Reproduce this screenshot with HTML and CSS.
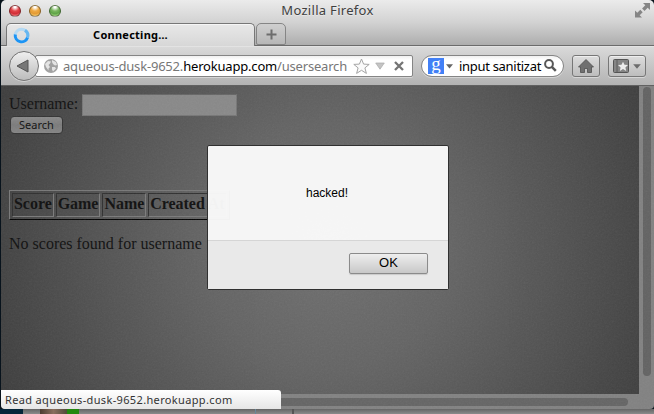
FILE: index.html
```html
<!DOCTYPE html>
<html lang="en">
<head>
<meta charset="utf-8">
<title>Mozilla Firefox</title>
<link rel="stylesheet" href="styles.css">
</head>
<body>
<div class="window">
  <header class="chrome-top">
    <div class="titlebar">
      <div class="lights"><i class="light red"></i><i class="light amber"></i><i class="light green"></i></div>
      <span class="window-title">Mozilla Firefox</span>
      <svg class="expand" width="15" height="15" viewBox="0 0 15 15" fill="#858585"><path d="M8 0h7v7l-2.300-2.300-3.200 3.200-2.400-2.400 3.200-3.200zM0 7.500l2.300 2.300 3-3 2.400 2.400-3 3L7 14.500H0z"/></svg>
    </div>
    <div class="tabs">
      <div class="tab">
        <svg class="spinner" width="17" height="17" viewBox="0 0 17 17" fill="none" stroke-width="3"><circle cx="8.500" cy="8.500" r="6.300" stroke="#b5d9f2"/><path d="M2.300 7.500A6.300 6.300 0 0 0 14.500 10.500" stroke="#1c94f4"/><path d="M14.500 10.500A6.300 6.300 0 0 0 12 3.300" stroke="#67b7f0"/></svg>
        <span class="tab-label">Connecting…</span>
      </div>
      <div class="new-tab"><svg width="11" height="11" viewBox="0 0 11 11"><path d="M5.500 0.500v10M0.500 5.500h10" stroke="#6d6d6d" stroke-width="2"/></svg></div>
    </div>
  </header>
  <nav class="toolbar">
    <div class="back"><svg width="14" height="14" viewBox="0 0 14 14"><path d="M1 7L12 1v12z" fill="#777" stroke="#555"/></svg></div>
    <div class="url">
      <svg class="globe" width="14" height="14" viewBox="0 0 14 14"><circle cx="7" cy="7" r="7" fill="#a2a2a2"/><path d="M1 5l3-3 3 .5-1 2L4.500 6 6 8l-1.500 1.500v2L2 8zM8 1l4 2 1 3-2 .5L9 5 8 3zM8 8l3 0 1 1.500-3 3-1-2z" fill="#e4e4e4"/></svg>
      <span class="address">aqueous-dusk-9652.<b>herokuapp.com</b>/usersearch</span>
      <svg class="star" width="17" height="17" viewBox="0 0 17 17"><path d="M8.500 1l2.100 5.100 5.600.3-4.300 3.500 1.500 5.500-4.900-3.100-4.900 3.100 1.500-5.500L.8 6.400l5.600-.3z" fill="#fafafa" stroke="#a5a5a5"/></svg>
      <svg class="drop" width="10" height="8" viewBox="0 0 10 8"><path d="M.7 1h8.600L5 7.200z" fill="#c4c4c4" stroke="#aaa" stroke-width=".7"/></svg>
      <svg class="stop" width="10" height="10" viewBox="0 0 10 10"><path d="M1 1l8 8M9 1L1 9" stroke="#747474" stroke-width="2.300"/></svg>
    </div>
    <div class="search">
      <span class="engine">g</span>
      <svg class="engine-drop" width="7" height="5" viewBox="0 0 7 5"><path d="M0 .3h7L3.500 4.500z" fill="#666"/></svg>
      <span class="query">input sanitizat</span>
      <svg class="lens" width="13" height="13" viewBox="0 0 13 13" fill="none" stroke="#585858"><circle cx="5" cy="5" r="3.900" stroke-width="2"/><path d="M7.800 7.800l4 4" stroke-width="2.500"/></svg>
    </div>
    <div class="tool home"><svg width="16" height="14" viewBox="0 0 16 14"><path d="M8 .5L15.500 8h-2v5.500h-4v-4h-3v4h-4V8h-2z" fill="#707070" stroke="#4f4f4f" stroke-width=".8"/></svg></div>
    <div class="tool marks"><svg width="17" height="15" viewBox="0 0 17 15"><rect x=".5" y=".5" width="15" height="13" rx="1" fill="#858585" stroke="#555"/><path d="M4 1v12" stroke="#5c5c5c"/><path d="M10 2.800l1.500 3 3.500.3-2.600 2.300.8 3.600-3.200-1.900L6.800 12l.8-3.600L5 6.100l3.500-.3z" fill="#eee"/></svg><svg width="8" height="5" viewBox="0 0 8 5"><path d="M.2.300h7.600L4 4.800z" fill="#6c6c6c"/></svg></div>
  </nav>
  <main class="viewport">
    <div class="page">
      <form class="form">
        <div class="field"><label>Username:</label><span class="input"></span></div>
        <span class="submit">Search</span>
      </form>
      <table class="scores" border="1"><tr><th>Score</th><th>Game</th><th>Name</th><th>Created At</th></tr></table>
      <p class="empty">No scores found for username</p>
    </div>
    <div class="vbar"><i></i></div>
    <div class="hbar"><i></i></div>
    <div class="corner"></div>
    <svg class="grain" width="653" height="324"><filter id="noise"><feTurbulence type="fractalNoise" baseFrequency=".6" numOctaves="2"/><feColorMatrix type="saturate" values="0"/></filter><rect width="653" height="324" filter="url(#noise)"/></svg>
    <section class="dialog">
      <div class="message">hacked!</div>
      <div class="actions"><span class="ok">OK</span></div>
    </section>
    <div class="status">Read aqueous-dusk-9652.herokuapp.com</div>
  </main>
</div>
<div class="behind"><i class="navy"></i><i class="gap"></i><i class="photo"></i><i class="leaf"></i><i class="pane"></i><i class="divider"></i></div>
</body>
</html>
```

FILE: styles.css
```css
* { box-sizing: border-box; }
body {
  margin: 0;
  width: 654px;
  height: 414px;
  overflow: hidden;
  background: #08131c;
  font-family: "Noto Sans", "Open Sans", sans-serif;
}
svg { display: block; flex: none; }
.window {
  width: 653px;
  height: 409px;
  margin-left: 1px;
  overflow: hidden;
  border-radius: 5px 5px 4px 4px;
}
.chrome-top {
  height: 46px;
  background: linear-gradient(#ebebeb, #d2d2d2 50%, #adadad);
  border-bottom: 1px solid #6b6b6b;
}
.titlebar {
  display: flex;
  align-items: center;
  height: 23px;
  padding: 0 3px 2px 8px;
}
.lights { display: flex; gap: 8px; width: 76px; }
.light { width: 12px; height: 12px; border-radius: 50%; border: 1px solid #0006; }
.red { background: radial-gradient(circle at 50% 10%, #fff 8%, #e3474b 40%, #d22d36 65%, #ffa5a5); }
.amber { background: radial-gradient(circle at 50% 10%, #fff 8%, #eeaa45 40%, #e39b35 65%, #ffe795); }
.green { background: radial-gradient(circle at 50% 10%, #fff 8%, #7bb760 40%, #5fa448 65%, #c7f3a0); }
.window-title {
  flex: 1;
  text-align: center;
  font-size: 13px;
  line-height: 20px;
  letter-spacing: .3px;
  color: #404040;
  padding: 0 19px 2px 0;
  text-shadow: 0 1px #fff6;
}
.expand { margin-right: 1px; margin-left: 46px; }
.tabs { display: flex; height: 23px; padding-left: 5px; gap: 1px; }
.tab {
  display: flex;
  align-items: center;
  width: 249px;
  height: 23px;
  padding-left: 6px;
  background: linear-gradient(#e8e8e8, #d7d7d7);
  border: 1px solid #777;
  border-bottom: 0;
  border-radius: 5px 5px 0 0;
  box-shadow: inset 0 1px #f6f6f6;
}
.tab-label {
  width: 191px;
  text-align: center;
  font-size: 11px;
  font-weight: 700;
  line-height: 20px;
  letter-spacing: .25px;
  margin-left: 5px;
}
.new-tab {
  display: flex;
  align-items: center;
  justify-content: center;
  width: 30px;
  height: 22px;
  border: 1px solid #858585;
  border-radius: 5px 5px 2px 2px;
  background: linear-gradient(#cfcfcf, #b7b7b7);
}
.toolbar {
  display: flex;
  align-items: center;
  height: 40px;
  padding-left: 8px;
  background: linear-gradient(#d9d9d9, #b3b3b3);
  border-top: 1px solid #e3e3e3;
  border-bottom: 1px solid #616161;
}
.back {
  position: relative;
  z-index: 1;
  display: flex;
  align-items: center;
  justify-content: center;
  width: 30px;
  height: 30px;
  padding-right: 3px;
  border: 1px solid #747474;
  border-radius: 50%;
  background: linear-gradient(#efefef, #bcbcbc);
  box-shadow: 0 1px #fff6;
}
.url {
  display: flex;
  align-items: center;
  width: 378px;
  height: 22px;
  margin-left: -4px;
  padding-left: 8px;
  border: 1px solid #858585;
  border-radius: 2px;
  background: linear-gradient(#f0f0f0, #fff 4px);
  box-shadow: 0 1px #fff6;
}
.address {
  width: 286px;
  margin-left: 5px;
  white-space: nowrap;
  font-size: 13px;
  line-height: 20px;
  letter-spacing: -.19px;
  color: #777;
}
.address b { font-weight: 400; color: #000; }
.star { margin-left: 4px; }
.drop { margin-left: 5px; }
.stop { margin-left: 9px; }
.search {
  display: flex;
  align-items: center;
  width: 143px;
  height: 22px;
  margin-left: 8px;
  padding-left: 6px;
  border: 1px solid #858585;
  border-radius: 11px;
  background: linear-gradient(#f0f0f0, #fff 4px);
  box-shadow: 0 1px #fff6;
}
.engine {
  width: 16px;
  height: 16px;
  background: #4280f6;
  color: #fff;
  font: 19px/11px "Liberation Serif", serif;
  text-align: center;
}
.engine-drop { margin-left: 2px; }
.query {
  width: 84px;
  margin-left: 6px;
  white-space: nowrap;
  font-size: 13px;
  line-height: 20px;
  letter-spacing: -.3px;
}
.lens { margin-left: 1px; margin-bottom: 2px; }
.tool {
  display: flex;
  align-items: center;
  justify-content: center;
  height: 22px;
  border: 1px solid #777;
  border-radius: 3px;
  background: linear-gradient(#ddd, #bdbdbd);
  box-shadow: inset 0 1px #eee, 0 1px #fff6;
}
.home { width: 28px; margin-left: 8px; }
.marks { width: 38px; margin-left: 8px; gap: 3px; }
.viewport {
  position: relative;
  display: grid;
  grid-template: 308px 15px / 638px 15px;
}
.page {
  padding: 8px;
  background: radial-gradient(ellipse 355px 350px at 326px 161px, #707070 0, #646464 35%, #505050 70%, #3e3e3e);
  font: 16px/18px "Liberation Serif", serif;
  color: #101010;
}
.field { display: flex; align-items: center; height: 22px; }
.field label { padding-bottom: 2px; }
.input {
  width: 155px;
  height: 22px;
  margin-left: 4px;
  border: 1px solid #777;
  border-top-color: #666;
  background: #898989;
}
.submit {
  display: block;
  width: 53px;
  height: 18px;
  margin-left: 1px;
  border: 1px solid #333;
  border-radius: 4px;
  background: linear-gradient(#8b8b8b, #7b7b7b 50%, #858585);
  text-align: center;
  font: 11px/16px "Noto Sans", sans-serif;
}
.form { margin: 0; }
.scores {
  margin-top: 56px;
  border: 1px outset #808080;
  border-color: #797979 #363636 #363636 #797979;
  border-spacing: 2px;
}
.scores th {
  height: 24px;
  padding: 0 1px 3px;
  border: 1px solid;
  border-color: #303030 #7b7b7b #7b7b7b #303030;
  white-space: nowrap;
  letter-spacing: -.04px;
}
.empty { margin: 15px 0 0; }
.vbar, .hbar, .corner { background: #828282; }
.vbar { padding: 1px 3px 0 4px; }
.vbar i { display: block; height: 289px; border-radius: 4px; background: #636363; }
.hbar { padding: 4px 11px 0 0; }
.hbar i { display: block; height: 8px; border-radius: 4px; background: #656565; }
.grain { position: absolute; inset: 0; opacity: .08; }
.dialog {
  position: absolute;
  left: 206px;
  top: 59px;
  width: 242px;
  height: 145px;
  border: 1px solid #303030;
  border-radius: 2px;
  background: #fafafaf7;
  font-family: "Liberation Sans", sans-serif;
}
.message {
  height: 94px;
  padding: 39px 2px 0 0;
  text-align: center;
  font-size: 12px;
  line-height: 16px;
}
.actions {
  display: flex;
  justify-content: flex-end;
  height: 49px;
  padding: 12px 20px 0 0;
  border-top: 1px solid #d5d5d5;
  background: #e9e9e9;
}
.ok {
  width: 79px;
  height: 21px;
  border: 1px solid #8b8b8b;
  border-radius: 2px;
  background: linear-gradient(#eee, #c8c8c8);
  box-shadow: 0 1px 1px #0002;
  text-align: center;
  font-size: 13px;
  line-height: 18px;
}
.status {
  position: absolute;
  left: 0;
  bottom: 0;
  width: 280px;
  height: 19px;
  padding-left: 4px;
  border-radius: 0 3px 0 3px;
  background: linear-gradient(#fff, #e6e6e6);
  font-size: 11px;
  line-height: 19px;
  letter-spacing: .35px;
  color: #333;
  white-space: nowrap;
}
.behind { display: flex; height: 5px; background: linear-gradient(#656565, #8b8b8b); }
.navy { width: 23px; background: #06263a; }
.gap { width: 17px; }
.photo { width: 27px; background: linear-gradient(90deg, #4c3c32, #8a6f5f 50%, #514a3b); }
.leaf { width: 12px; background: #23880f; }
.pane { width: 177px; border-right: 1px solid #66879b; }
.divider { width: 38px; border-right: 2px solid #555; }
```
